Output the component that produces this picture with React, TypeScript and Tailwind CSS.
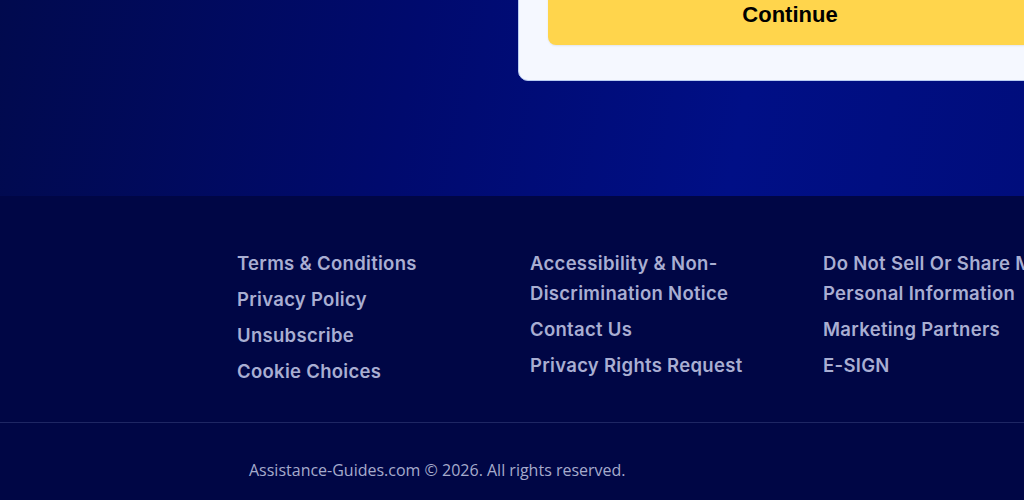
const col1 = [['Terms & Conditions'], ['Privacy Policy'], ['Unsubscribe'], ['Cookie Choices']];
const col2 = [['Accessibility & Non-', 'Discrimination Notice'], ['Contact Us'], ['Privacy Rights Request']];
const col3 = [['Do Not Sell Or Share My', 'Personal Information'], ['Marketing Partners'], ['E-SIGN']];

function LinkColumn({ items }: { items: string[][] }) {
  return (
    <ul className="flex flex-col gap-[6px] w-[293px] shrink-0">
      {items.map((lines, i) => (
        <li key={i} className="whitespace-nowrap">
          <a href="#" className="block leading-[30px] text-[18.5px] font-semibold text-[#a9aed2] tracking-[0.3px]">
            {lines.map((l, j) => (
              <span key={j} className="block">{l}</span>
            ))}
          </a>
        </li>
      ))}
    </ul>
  );
}

export default function App() {
  return (
    <div className="w-[1024px] h-[500px] overflow-hidden bg-[#000645]">
      <section className="h-[197px] bg-[linear-gradient(100deg,#010a4e_0%,#000a6e_40%,#000f86_72%,#000d7c_100%)] pl-[518px]">
        <div className="w-[544px] h-[82px] -mt-px bg-[#f5f8ff] border border-[#b9ccf2] rounded-b-[10px] px-[29px] pb-[35px] flex flex-col justify-end">
          <button className="h-[47px] w-full bg-[#ffd54c] rounded-b-[8px] flex items-end justify-center pb-[14px] text-[22px] font-bold text-black font-['Liberation_Sans',Arial,sans-serif] shadow-[0_1px_2px_rgba(0,0,0,0.08)]">
            Continue
          </button>
        </div>
      </section>
      <footer className="font-['Inter',sans-serif]">
        <div className="flex pl-[237px] pt-[52px] h-[226px]">
          <LinkColumn items={col1} />
          <LinkColumn items={col2} />
          <LinkColumn items={col3} />
        </div>
        <div className="border-t border-[#1e2663]" />
        <p className="pl-[249px] pt-[35px] text-[16px] text-[#a6abcc] font-['Open_Sans',sans-serif]">
          Assistance-Guides.com © 2026. All rights reserved.
        </p>
      </footer>
    </div>
  );
}
